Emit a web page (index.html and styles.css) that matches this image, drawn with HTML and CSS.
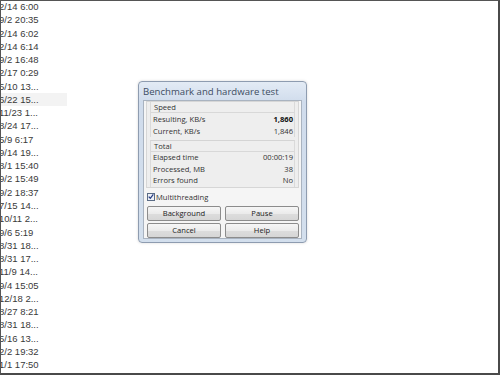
FILE: index.html
```html
<!DOCTYPE html>
<html>
<head>
<meta charset="utf-8">
<link rel="stylesheet" href="styles.css">
</head>
<body>
<div class="screen">
  <ul class="list">
    <li>2/14 6:00</li>
    <li>9/2 20:35</li>
    <li>2/14 6:02</li>
    <li>2/14 6:14</li>
    <li>9/2 16:48</li>
    <li>2/17 0:29</li>
    <li>5/10 13...</li>
    <li class="sel">6/22 15...</li>
    <li>11/23 1...</li>
    <li>8/24 17...</li>
    <li>5/9 6:17</li>
    <li>9/14 19...</li>
    <li>8/1 15:40</li>
    <li>9/2 15:49</li>
    <li>9/2 18:37</li>
    <li>7/15 14...</li>
    <li>10/11 2...</li>
    <li>9/6 5:19</li>
    <li>8/31 18...</li>
    <li>8/31 17...</li>
    <li>11/9 14...</li>
    <li>9/4 15:05</li>
    <li>12/18 2...</li>
    <li>8/27 8:21</li>
    <li>8/31 18...</li>
    <li>5/16 13...</li>
    <li>2/2 19:32</li>
    <li>1/1 17:50</li>
  </ul>
  <div class="dialog">
    <div class="title">Benchmark and hardware test</div>
    <div class="client">
      <div class="panel">
        <div class="group">
          <div class="ghead">Speed</div>
          <div class="row"><span>Resulting, KB/s</span><b>1,860</b></div>
          <div class="row"><span>Current, KB/s</span><span>1,846</span></div>
        </div>
        <div class="group second">
          <div class="ghead">Total</div>
          <div class="row short"><span>Elapsed time</span><span>00:00:19</span></div>
          <div class="row short"><span>Processed, MB</span><span>38</span></div>
          <div class="row short"><span>Errors found</span><span>No</span></div>
        </div>
      </div>
      <label class="check"><span class="box"><svg width="7" height="7" viewBox="0 0 7 7"><path d="M0.8 3.6 L2.7 5.6 L6.2 0.9" fill="none" stroke="#2a3f86" stroke-width="1.5"/></svg></span>Multithreading</label>
      <div class="buttons">
        <div class="btn">Background</div>
        <div class="btn">Pause</div>
        <div class="btn">Cancel</div>
        <div class="btn">Help</div>
      </div>
    </div>
  </div>
</div>
</body>
</html>
```
FILE: styles.css
```css
html, body {
  margin: 0;
  padding: 0;
  background: #ffffff;
}
body {
  font-family: "Liberation Sans", Arial, sans-serif;
  color: #333;
}
.screen {
  box-sizing: border-box;
  width: 500px;
  height: 375px;
  border-top: 1px solid #555;
  border-left: 1px solid #555;
  border-right: 2px solid #4a4a4a;
  border-bottom: 2px solid #4a4a4a;
  display: flex;
  overflow: hidden;
}
.list {
  list-style: none;
  margin: -1px 0 0 -2px;
  padding: 0;
  width: 139px;
  flex: none;
  font-size: 9.5px;
}
.list li {
  height: 13.27px;
  line-height: 13px;
  width: 68px;
  white-space: nowrap;
  color: #3a3a3a;
}
.list li.sel {
  background: #f3f3f3;
}
.dialog {
  margin-top: 80px;
  width: 169px;
  height: 162px;
  box-sizing: border-box;
  border: 1px solid #8e9cb0;
  border-radius: 4px;
  background: linear-gradient(#e3ebf5, #d0dcec 20px, #d3dfed);
  padding: 0 4px 3px 4px;
  display: flex;
  flex-direction: column;
  box-shadow: 0 0 3px rgba(0,0,0,0.15);
}
.title {
  height: 18px;
  line-height: 19px;
  font-size: 9.6px;
  color: #3d4d62;
  padding-left: 0;
  font-family: "Open Sans", sans-serif;
  white-space: nowrap;
}
.client {
  flex: 1;
  background: #f5f5f5;
  border: 1px solid #a9b3c0;
  padding: 0 2px 0 2px;
  display: flex;
  flex-direction: column;
}
.panel {
  background: #eeeeee;
  border: 1px solid #d6d6d6;
  padding: 0 3px 0 3px;
}
.group {
  border-left: 1px solid #dadada;
  border-right: 1px solid #dadada;
  padding: 0 1px 0 2px;
}
.group.second {
  margin-top: 3px;
  border-top: 1px solid #d4d4d4;
}
.ghead {
  font-family: "Open Sans", sans-serif;
  font-size: 7.6px;
  height: 11px;
  line-height: 11px;
  padding-left: 3px;
  color: #333;
  border-bottom: 1px solid #d8d8d8;
  margin: 0 -1px 0 -2px;
  box-sizing: border-box;
}
.row {
  display: flex;
  justify-content: space-between;
  font-family: "Open Sans", sans-serif;
  font-size: 7.6px;
  height: 12px;
  line-height: 12px;
  color: #333;
}
.row.short {
  height: 11.5px;
  line-height: 11.5px;
}
.row b {
  font-weight: 700;
  color: #111;
}
.check {
  display: flex;
  align-items: center;
  height: 18px;
  font-family: "Open Sans", sans-serif;
  font-size: 7.6px;
  color: #333;
  padding-left: 1px;
}
.box {
  width: 8px;
  height: 8px;
  border: 1px solid #5b6c86;
  background: #eef2f8;
  display: flex;
  align-items: center;
  justify-content: center;
  margin-right: 1px;
  box-sizing: border-box;
}
.buttons {
  display: grid;
  grid-template-columns: 74px 74px;
  column-gap: 4px;
  row-gap: 2px;
  padding: 0 0 0 1px;
}
.btn {
  height: 15px;
  box-sizing: border-box;
  border: 1px solid #8c8c8c;
  border-radius: 2px;
  background: linear-gradient(#f6f6f6, #ebebeb 50%, #dddddd 51%, #d6d6d6);
  font-family: "Open Sans", sans-serif;
  font-size: 7.6px;
  line-height: 13px;
  text-align: center;
  color: #222;
}
```
